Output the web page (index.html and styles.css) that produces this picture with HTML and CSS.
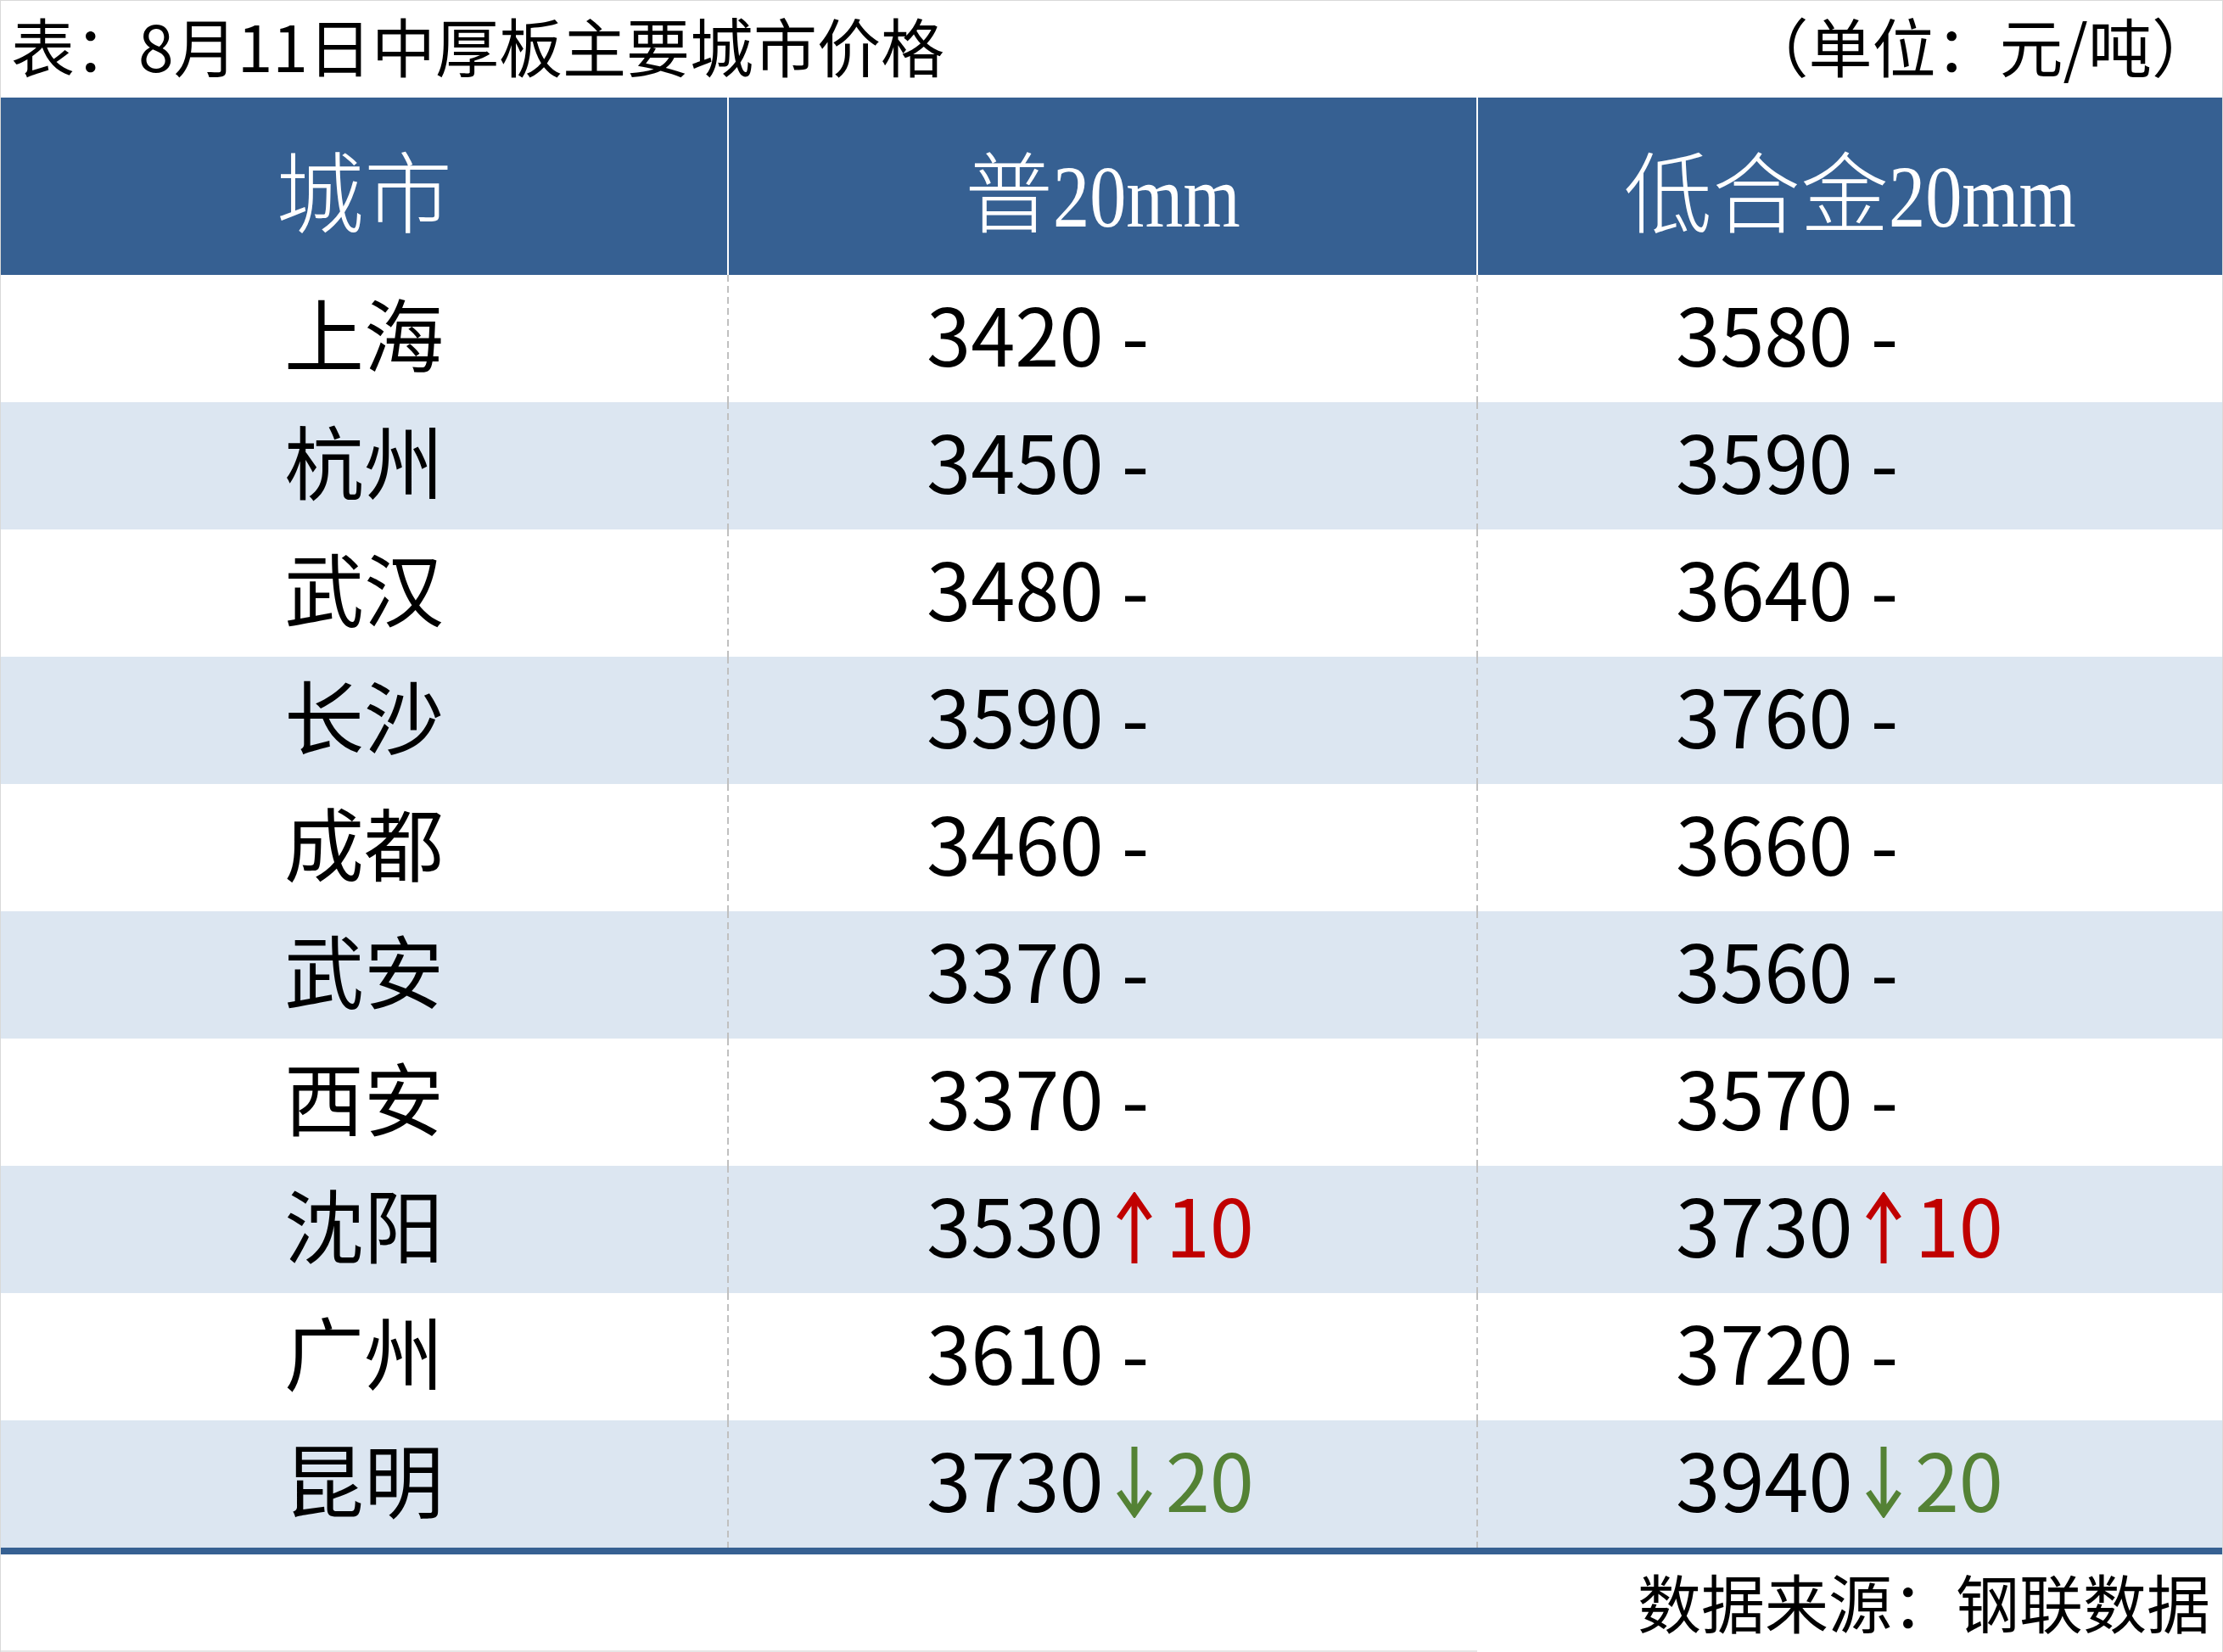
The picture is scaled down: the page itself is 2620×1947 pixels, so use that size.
FILE: index.html
```html
<!DOCTYPE html>
<html lang="zh-CN">
<head>
<meta charset="utf-8">
<title>8月11日中厚板主要城市价格</title>
<link rel="stylesheet" href="styles.css">
</head>
<body>
<div class="sheet">
  <div class="titlebar">
    <div class="title">表：8月11日中厚板主要城市价格</div>
    <div class="unit">（单位：元/吨）</div>
  </div>
  <div class="table">
    <div class="hrow">
      <div class="hcell">城市</div>
      <div class="hcell sep">普<span class="cond">20mm</span></div>
      <div class="hcell sep">低合金<span class="cond">20mm</span></div>
    </div>
    <div class="row">
      <div class="city">上海</div>
      <div class="val">3420 -</div>
      <div class="val">3580 -</div>
    </div>
    <div class="row alt">
      <div class="city">杭州</div>
      <div class="val">3450 -</div>
      <div class="val">3590 -</div>
    </div>
    <div class="row">
      <div class="city">武汉</div>
      <div class="val">3480 -</div>
      <div class="val">3640 -</div>
    </div>
    <div class="row alt">
      <div class="city">长沙</div>
      <div class="val">3590 -</div>
      <div class="val">3760 -</div>
    </div>
    <div class="row">
      <div class="city">成都</div>
      <div class="val">3460 -</div>
      <div class="val">3660 -</div>
    </div>
    <div class="row alt">
      <div class="city">武安</div>
      <div class="val">3370 -</div>
      <div class="val">3560 -</div>
    </div>
    <div class="row">
      <div class="city">西安</div>
      <div class="val">3370 -</div>
      <div class="val">3570 -</div>
    </div>
    <div class="row alt">
      <div class="city">沈阳</div>
      <div class="val">3530<span class="up"><svg class="arr" viewBox="0 0 42 84" aria-label="↑"><path d="M21 6V84M3 31L21 5L39 31"/></svg>10</span></div>
      <div class="val">3730<span class="up"><svg class="arr" viewBox="0 0 42 84" aria-label="↑"><path d="M21 6V84M3 31L21 5L39 31"/></svg>10</span></div>
    </div>
    <div class="row">
      <div class="city">广州</div>
      <div class="val">3610 -</div>
      <div class="val">3720 -</div>
    </div>
    <div class="row alt">
      <div class="city">昆明</div>
      <div class="val">3730<span class="down"><svg class="arr" viewBox="0 0 42 84" aria-label="↓"><path d="M21 0V78M3 53L21 79L39 53"/></svg>20</span></div>
      <div class="val">3940<span class="down"><svg class="arr" viewBox="0 0 42 84" aria-label="↓"><path d="M21 0V78M3 53L21 79L39 53"/></svg>20</span></div>
    </div>
  </div>
  <div class="footer">数据来源：钢联数据</div>
</div>
</body>
</html>
```

FILE: styles.css
```css
html, body {
  margin: 0;
  padding: 0;
  background: #ffffff;
}

.sheet {
  width: 2620px;
  height: 1947px;
  box-sizing: border-box;
  border: 1px solid #d9d9d9;
  border-bottom: none;
  font-family: "Noto Sans CJK SC", "Noto Sans", sans-serif;
  color: #000000;
  display: flex;
  flex-direction: column;
}

.titlebar {
  height: 114px;
  box-sizing: border-box;
  display: flex;
  justify-content: space-between;
  align-items: center;
  padding: 0 8px 12px 12px;
  font-size: 75px;
  line-height: 1;
}

.table {
  display: flex;
  flex-direction: column;
  border-bottom: 8px solid #366092;
}

.hrow,
.row {
  display: grid;
  grid-template-columns: 856px 883px 1fr;
}

.hrow {
  height: 209px;
  background: #366092;
  color: #ffffff;
}

.hcell {
  display: flex;
  align-items: center;
  justify-content: center;
  font-family: "Liberation Serif", "Noto Sans CJK SC", serif;
  font-weight: 300;
  font-size: 104px;
  line-height: 1;
  padding-top: 24px;
}

.hcell.sep {
  border-left: 2px solid #ffffff;
}

.cond {
  display: inline-block;
  transform: scaleX(0.83);
  transform-origin: left center;
  margin-right: -45px;
}

.row {
  height: 150px;
  background: #ffffff;
  font-size: 94px;
  line-height: 1;
}

.row.alt {
  background: #dce6f1;
}

.city {
  display: flex;
  align-items: center;
  justify-content: center;
  padding-bottom: 16px;
}

.val {
  display: flex;
  align-items: center;
  padding-left: 235px;
  padding-bottom: 16px;
  background-image: linear-gradient(#c0c0c0 0 8px, transparent 8px 13px);
  background-size: 2px 13px;
  background-repeat: repeat-y;
  background-position: 0 0;
  white-space: pre;
}

.arr {
  display: inline-block;
  width: 42px;
  height: 84px;
  margin: 0 16px 0 15px;
  vertical-align: -7px;
  fill: none;
  stroke: currentColor;
  stroke-width: 7;
  stroke-linejoin: miter;
}

.up {
  color: #c00000;
}

.down {
  color: #548235;
}

.footer {
  flex: 1;
  display: flex;
  align-items: center;
  justify-content: flex-end;
  padding-right: 14px;
  padding-bottom: 6px;
  font-size: 75px;
  line-height: 1;
  background-image: linear-gradient(#e6e6e6, #e6e6e6);
  background-size: 1740px 2px;
  background-repeat: no-repeat;
  background-position: left bottom;
}
```
